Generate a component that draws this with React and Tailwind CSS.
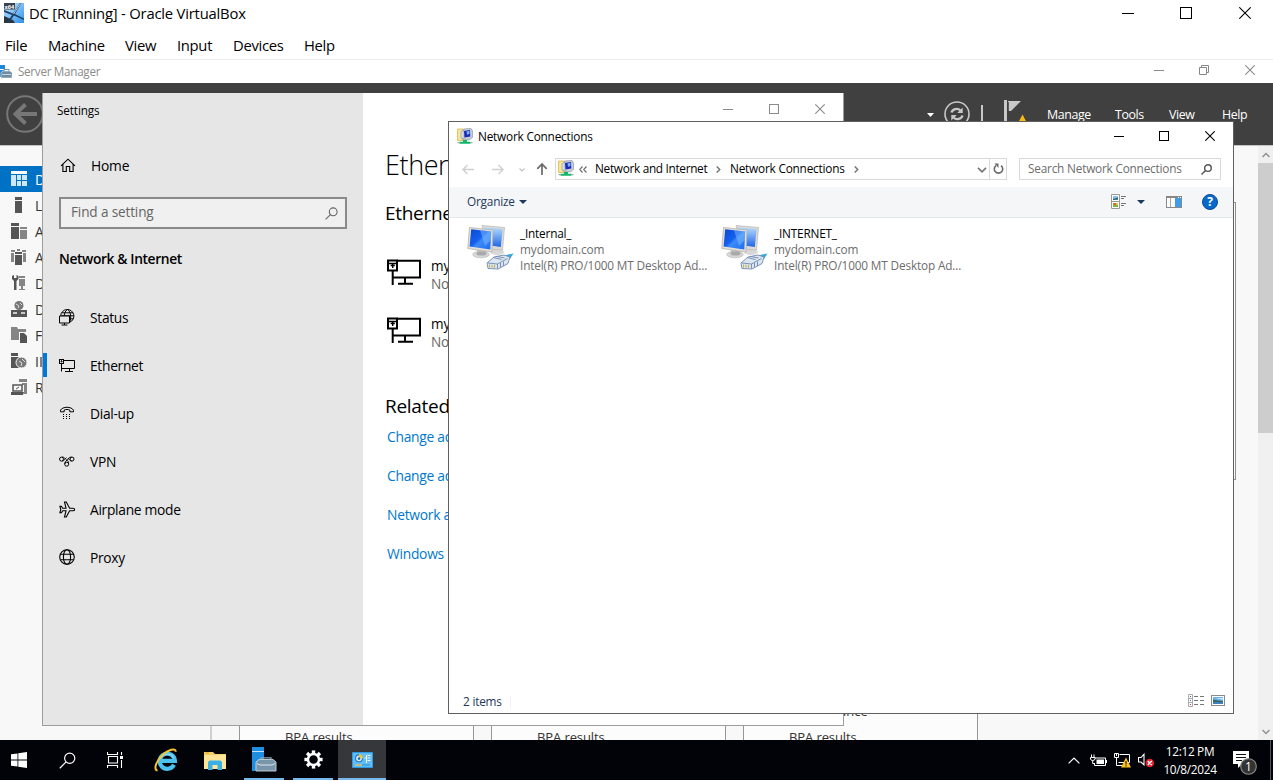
import React from "react";

const svg = (w, h, children, extra = {}) => (
  <svg width={w} height={h} viewBox={`0 0 ${w} ${h}`} fill="none" className="block shrink-0" {...extra}>
    {children}
  </svg>
);

/* ---------- window buttons ---------- */
const Min = ({ s = 10, c = "#000" }) => svg(s, s, <rect x="0" y={Math.floor(s / 2)} width={s} height="1" fill={c} />);
const Max = ({ s = 10, c = "#000" }) =>
  svg(s, s, <rect x="0.5" y="0.5" width={s - 1} height={s - 1} stroke={c} />);
const Close = ({ s = 10, c = "#000" }) =>
  svg(s, s, <path d={`M0.3 0.3L${s - 0.3} ${s - 0.3}M${s - 0.3} 0.3L0.3 ${s - 0.3}`} stroke={c} strokeWidth="1.1" />);
const Restore = ({ c = "#888" }) =>
  svg(10, 10, <path d="M0.5 2.5H7.5V9.5H0.5ZM2.5 2.5V0.5H9.5V7.5H7.5" stroke={c} />);

/* ---------- settings icons ---------- */
const Ethernet = () =>
  svg(16, 13, <>
    <path d="M5 1.5H15.5V9.5H3M10.5 9.5V12M6 12.5H14M2.5 5V12.5" stroke="#000" />
    <rect x="0.5" y="0.5" width="4" height="4" stroke="#000" />
    <path d="M2.5 1V3.5M1.5 2.5H3.5" stroke="#000" strokeWidth="0.8" />
  </>);
const HomeIcon = () =>
  svg(16, 15, <path d="M1 7.8L8 1.2L15 7.8M2.9 6.3V13.5H6.3V8.5H9.7V13.5H13.1V6.3" stroke="#000" strokeWidth="1.1" />);
const StatusIcon = () =>
  svg(16, 17, <g transform="translate(0 -0.5)">
    <path d="M1.7 7.3A6.6 6.6 0 1 1 10.8 13.7M2.8 4.3H14M8.5 0.9C6.2 2.4 5.4 4.8 5.2 7.3M8.5 0.9C12 3.4 12.3 9 10.9 13.4M10.8 10.3H14M2.3 7.3H15" stroke="#000" strokeWidth="1" />
    <path d="M0.5 7.5H10.5V14.5H0.5Z" stroke="#000" fill="#e6e6e6" />
    <path d="M5.5 14.5V16.5M2.5 16.5H8.5" stroke="#000" />
  </g>);
const DialIcon = () =>
  svg(16, 14, <>
    <path d="M1.5 5.8V4.2C3.5 0.3 12.5 0.3 14.5 4.2V5.8H10.8V4C9 3.3 7 3.3 5.2 4V5.8Z" stroke="#000" />
    {[8, 10, 12].map((y) => [4, 7, 10].map((x) => <rect key={`${x}-${y}`} x={x} y={y} width="1" height="1" fill="#000" />))}
  </>);
const VpnIcon = () =>
  svg(16, 11, <>
    <circle cx="2.5" cy="3.1" r="2" stroke="#000" />
    <circle cx="13" cy="3.1" r="2" stroke="#000" />
    <circle cx="7.7" cy="8.2" r="2" stroke="#000" />
    <path d="M3 1C5.5 0.8 6 3 7.5 3.8C9 4.6 9.6 5.6 9.6 7.5M3.2 5C5.5 5 6 2.6 7.5 1.6M12.5 1C10 0.8 9.3 3.2 8 4.2C6.4 5.4 5.8 6 5.8 8M12.5 5C10.8 5 10 3 8.8 2" stroke="#000" strokeWidth="0.9" />
  </>);
const PlaneIcon = () =>
  svg(17, 17, <path d="M15.6 8.5C15.6 7.7 14.9 7.2 14 7.2H10.6L7.3 1H5.5L7 7.2H3.7L2.4 5.2H0.9L1.8 8.5L0.9 11.8H2.4L3.7 9.8H7L5.5 16H7.3L10.6 9.8H14C14.9 9.8 15.6 9.3 15.6 8.5Z" stroke="#000" strokeWidth="1.1" />);
const GlobeIcon = () =>
  svg(16, 16, <g stroke="#000" strokeWidth="1.1">
    <circle cx="8" cy="8" r="7.3" />
    <ellipse cx="8" cy="8" rx="3.6" ry="7.3" />
    <path d="M1.5 5.2H14.5M1.5 10.8H14.5" />
  </g>);
const Adapter = () =>
  svg(36, 27, <g stroke="#000" strokeWidth="2">
    <path d="M10 1.7H33V18.5H5.5M18 18.5V24.5M11 24.8H26M5.7 12V26" strokeWidth="2" />
    <rect x="1" y="1.5" width="9" height="10" />
    <path d="M2 4.5H9.5M5.7 5V9M3.7 6.5H7.8" strokeWidth="1.4" />
  </g>);

/* ---------- explorer icons ---------- */
const NetFolder = () =>
  svg(17, 17, <>
    <path d="M0.5 1H6V12.5H0.5Z" fill="#f7e59b" stroke="#d9b84d" strokeWidth="0.8" />
    <path d="M6.5 1L14 0.5L15.5 3V9.5L12 12L5 11Z" fill="#c6cdd6" stroke="#8c97a8" strokeWidth="0.7" />
    <path d="M4 3.5L7 2.5V11L4 10Z" fill="#d8dde4" stroke="#8c97a8" strokeWidth="0.6" />
    <path d="M7 3L13 2L13.3 8.5L7.5 9.5Z" fill="#1c2bb5" />
    <path d="M9.5 3.5L12.5 2.8V6L10 6.8Z" fill="#7db4ff" />
    <path d="M6 12H10V13.7H13.5V15.7H2.5V13.7H6Z" fill="#12b76b" />
    <path d="M0.5 14.7H2.5M13.5 14.7H15.5" stroke="#8f8f8f" />
  </>);
const Connection = () =>
  svg(48, 48, <>
    <defs>
      <linearGradient id="scr" x1="0" y1="0" x2="1" y2="1">
        <stop offset="0" stopColor="#0a49d4" />
        <stop offset="0.45" stopColor="#1560ee" />
        <stop offset="0.55" stopColor="#3b8cf8" />
        <stop offset="1" stopColor="#1f6bf0" />
      </linearGradient>
      <linearGradient id="scr2" x1="0" y1="0" x2="0" y2="1">
        <stop offset="0" stopColor="#b5dcfb" />
        <stop offset="1" stopColor="#1f66e8" />
      </linearGradient>
    </defs>
    <g transform="translate(0 1)">
      <ellipse cx="30" cy="27" rx="7" ry="3" fill="#d8d8d8" />
      <path d="M15 0.5L37.5 2.5L35.5 25L20 24Z" fill="#dcdad6" stroke="#b9b6b0" strokeWidth="0.7" />
      <path d="M17 2.2L35.6 4L33.8 22L20 20Z" fill="url(#scr2)" />
      <path d="M10 25L19 26L20 30H10Z" fill="#bdbdbd" />
      <ellipse cx="14" cy="29.5" rx="8.3" ry="3.3" fill="#d6d6d6" stroke="#b5b5b5" strokeWidth="0.6" />
      <ellipse cx="14.5" cy="28.5" rx="5" ry="2" fill="#a9a9a9" />
      <path d="M2.5 2.5L26 5L25 27L0.8 23.5Z" fill="#e2e0dc" stroke="#b6b3ad" strokeWidth="0.8" />
      <path d="M4.2 4.3L24.2 6.6L23.3 24.5L2.6 21.6Z" fill="url(#scr)" />
      <path d="M13 5.3L24.2 6.6L23.8 15L18 21Z" fill="#8cc5fc" opacity="0.45" />
      <path d="M35 32L41 29.5L46.5 28.5L43 34L38 36Z" fill="#36a8dc" />
      <path d="M20 38L27 32L37 30L43 32L41 38.5L31 44L21 43.5Z" fill="#dbe6f2" stroke="#7189ad" strokeWidth="0.9" />
      <path d="M21 38L30.5 39L40.5 33.5M30.5 39V43.5M26.5 32.5L34.5 34.5M29.5 31.4L37.5 33M33.5 38V42.5M36.5 36.5V41" stroke="#7189ad" strokeWidth="0.9" />
      <path d="M22.5 39.5V42.5M25 39.8V42.8M27.5 40V43" stroke="#c2b25b" strokeWidth="1.1" />
    </g>
  </>);
const Chevron = ({ d, w, h, c, sw = 1.5 }) => svg(w, h, <path d={d} stroke={c} strokeWidth={sw} />);
const Lens = ({ s = 13, c = "#000", sw = 1.1 }) => (
  <svg width={s} height={s} viewBox="0 0 13 13" fill="none" className="block shrink-0">
    <circle cx="8.2" cy="4.8" r="3.9" stroke={c} strokeWidth={sw} />
    <path d="M5.4 7.6L0.6 12.4" stroke={c} strokeWidth={sw} />
  </svg>
);

/* ---------- server manager sidebar icons ---------- */
const sm = {
  dash: <><rect width="16" height="3" fill="#fff" /><path d="M0 4H5V15H0ZM6 4H10V9H6ZM11 4H16V9H11ZM6 10H10V15H6ZM11 10H16V15H11Z" fill="#cfe6f7" /></>,
  local: <><rect x="4" width="7" height="3" fill="#555" /><rect x="4" y="4" width="7" height="12" fill="#555" /></>,
  all: <><path d="M0 0H8V3H0ZM0 4H8V16H0Z" fill="#555" /><path d="M9 4H16V6H9ZM9 7H16V16H9Z" fill="#858585" /></>,
  ad: <><path d="M0 1H4V3H0ZM0 4H3V13H0ZM11 1H15V3H11ZM12 4H15V13H12Z" fill="#858585" /><path d="M4 3H11V5H4ZM4 6H11V16H4Z" fill="#555" /><path d="M6 0L9 0V2H6Z" fill="#858585" /></>,
  dhcp: <><path d="M1 1V4L3 6V15H5.5V6L7.5 4V1L5.5 0V3H3V0Z" fill="#555" /><path d="M8 1H14V3H8ZM8 4H14V11H12V14H14V15H8V14H10V11H8Z" fill="#858585" /></>,
  dns: <><circle cx="8" cy="4.5" r="4.5" fill="#777" /><path d="M5 3L8 5L7 7M9 2L11 4" stroke="#ddd" /><path d="M0 9H16V16H0Z" fill="#555" /><path d="M2 12H6M10 12H14" stroke="#eee" strokeWidth="1.4" /></>,
  file: <><path d="M0 0H6L7 2H15V5H0ZM0 4H8V13H0Z" fill="#858585" /><path d="M9 6H13L16 9V16H9Z" fill="#555" /></>,
  iis: <><path d="M0 0H7V3H0ZM0 4H8V15H0Z" fill="#555" /><circle cx="10.5" cy="9.5" r="5.5" fill="#777" stroke="#f8f8f8" /><path d="M8 8L11 10L10 13M11 6L14 9" stroke="#ddd" /></>,
  remote: <><path d="M8 0H16V3H8ZM11 4H16V15H13V6H11Z" fill="#858585" /><path d="M2 6H11V12H2Z" stroke="#555" strokeWidth="1.5" /><path d="M0 13H13L12 16H0Z" fill="#555" /><path d="M5 10L8 8" stroke="#555" /></>,
};

const roles = [
  ["dash", "Dashboard"], ["local", "Local Server"], ["all", "All Servers"], ["ad", "AD DS"], ["dhcp", "DHCP"],
  ["dns", "DNS"], ["file", "File and Storage Services"], ["iis", "IIS"], ["remote", "Remote Access"],
];

function ServerManager() {
  return (
    <div className="flex h-[680px] flex-col">
      <div className="flex h-[23px] items-center bg-white text-[#8b8b8b]">
        {svg(13, 14, <>
          <path d="M0 0H5V4H0ZM0 5H4V12H0Z" fill="#1e88d8" />
          <path d="M1 7.5L3 6H10L12 7.5V13H1Z" fill="#6f8ea3" stroke="#fff" strokeWidth="0.5" />
          <path d="M4 6V4.5H9V6M1 9H12" stroke="#6f8ea3" />
          <path d="M2 9.5H11" stroke="#dfe8ee" strokeWidth="0.8" />
        </>)}
        <span className="ml-[5px] pt-px text-[11.7px] tracking-[-0.3px]">Server Manager</span>
        <div className="ml-auto flex items-center pb-[3px] pr-[18px]">
          <Min c="#8b8b8b" />
          <div className="ml-[35px]"><Restore /></div>
          <div className="ml-[36px]"><Close c="#8b8b8b" /></div>
        </div>
      </div>
      <div className="flex h-[62px] items-center bg-[#404040] text-white">
        <div className="ml-[6px]">
          {svg(38, 38, <>
            <circle cx="19" cy="19" r="17.8" stroke="#777" strokeWidth="2" />
            <path d="M31 19H10M19.5 9.5L9.5 19L19.5 28.5" stroke="#777" strokeWidth="4" />
          </>)}
        </div>
        <div className="ml-auto flex items-center pr-[25px]">
          <div className="pt-[2px]">{svg(7, 4, <path d="M0 0H7L3.5 4Z" fill="#fff" />)}</div>
          <div className="ml-[10px]">
            {svg(26, 26, <>
              <circle cx="13" cy="13" r="12" stroke="#c8c8c8" strokeWidth="1.6" />
              <path d="M7.5 11.5C8.5 8 13.5 6.5 16.5 9.5M18.5 14.5C17.5 18 12.5 19.5 9.5 16.5" stroke="#c8c8c8" strokeWidth="2.4" />
              <path d="M18.7 6.5V12H13.2ZM7.3 19.5V14H12.8Z" fill="#c8c8c8" />
            </>)}
          </div>
          <div className="ml-[11px] h-[18px] w-[2px] bg-[#c8c8c8]" />
          <div className="ml-[21px]">
            {svg(24, 28, <>
              <rect x="0" y="0" width="3" height="28" fill="#c8c8c8" />
              <path d="M4 1H17L7 11H4Z" fill="#c8c8c8" />
              <path d="M4.5 2V11" stroke="#404040" strokeWidth="0.8" />
              <path d="M18.5 14.5L23.5 24H13.5Z" fill="#fdb913" />
            </>)}
          </div>
          <div className="ml-[19px] flex pt-[2px] text-[12.4px] tracking-[-0.4px]">
            <span className="w-[68px]">Manage</span>
            <span className="w-[54px]">Tools</span>
            <span className="w-[53px]">View</span>
            <span className="w-[26px]">Help</span>
          </div>
        </div>
      </div>
      <div className="flex flex-1 border-t border-[#c4c4c4] bg-[#f8f8f8]">
        <div className="w-[212px] overflow-hidden border-r-2 border-[#cfcfcf] pt-[20px]">
          {roles.map(([k, name], i) => (
            <div key={name} className={i === 0 ? "flex h-[26px] items-center bg-[#0072c6] pl-[11px] text-[14px] text-white" : "flex h-[26px] items-center pl-[11px] text-[14px] text-[#333]"}>
              {svg(16, 16, sm[k])}
              <span className="ml-[8px] whitespace-nowrap">{name}</span>
            </div>
          ))}
        </div>
        <div className="flex flex-1 flex-col justify-between bg-[#f8f8f8] pt-[56px]">
          <div className="mr-[22px] h-[278px] border border-l-0 border-[#8f8f8f] bg-[#fcfcfc] pr-px" />
          <div className="flex h-[42px] gap-[17px] pl-[27px]">
            {[0, 1, 2].map((i) => (
              <div key={i} className="flex w-[235px] flex-col items-start justify-end border-x border-[#969696] bg-[#fcfcfc] pl-[45px] text-[13px] text-[#333]">
                <span className="h-[27px] leading-[18px]">Performance</span>
                <span className="h-[11px] leading-[17px] tracking-[-0.1px]">BPA results</span>
              </div>
            ))}
          </div>
        </div>
        <div className="flex w-[15px] flex-col items-center bg-[#f0f0f0]">
          <div className="flex h-[17px] items-center"><Chevron w={8} h={6} d="M0.5 5L4 1.5L7.5 5" c="#909090" /></div>
          <div className="h-[270px] w-full bg-[#cdcdcd]" />
          <div className="mt-auto flex h-[17px] items-center"><Chevron w={8} h={6} d="M0.5 1L4 4.5L7.5 1" c="#909090" /></div>
        </div>
      </div>
    </div>
  );
}

const nav = [
  ["Status", StatusIcon], ["Ethernet", Ethernet], ["Dial-up", DialIcon], ["VPN", VpnIcon], ["Airplane mode", PlaneIcon], ["Proxy", GlobeIcon],
];

function SettingsWindow() {
  return (
    <div className="absolute left-[42px] top-[33px] flex h-[633px] w-[802px] border border-t-0 border-[#9d9d9d] bg-white text-black">
      <div className="flex w-[320px] shrink-0 flex-col bg-[#e6e6e6]">
        <div className="flex h-[34px] items-center pl-[14px] pt-[2px] text-[11.7px] tracking-[-0.1px]">Settings</div>
        <div className="mt-[15px] flex h-[48px] items-center pl-[17px] text-[13.8px] tracking-[-0.2px]">
          <div className="pb-px"><HomeIcon /></div><span className="ml-[15px] pt-px">Home</span>
        </div>
        <div className="ml-[16px] mt-[7px] flex h-[32px] w-[288px] items-center justify-between border-2 border-[#8a8a8a] bg-[#f0f0f0] pl-[10px] pr-[7px] text-[13.6px] tracking-[-0.15px] text-[#666]">
          <span className="pb-[2px]">Find a setting</span><Lens c="#666" />
        </div>
        <div className="mt-[14px] flex h-[32px] items-center pl-[16px] text-[13.8px] font-semibold tracking-[-0.38px]">Network &amp; Internet</div>
        <div className="mt-[19px] flex flex-col">
          {nav.map(([name, Icon]) => (
            <div key={name} className="flex h-[48px] items-center text-[13.8px] tracking-[-0.3px]">
              <div className={name === "Ethernet" ? "mb-[2px] h-[24px] w-[4px] bg-[#0078d7]" : "mb-[2px] h-[24px] w-[4px]"} />
              <div className="ml-[12px] flex w-[31px] pb-[2px]"><Icon /></div>
              <span className="pt-px">{name}</span>
            </div>
          ))}
        </div>
      </div>
      <div className="flex flex-1 flex-col pl-[22px]">
        <div className="flex h-[32px] items-center justify-end gap-[36px] pr-[18px]">
          <Min c="#8b8b8b" /><Max c="#8b8b8b" /><Close c="#8b8b8b" />
        </div>
        <h1 className="mt-[20px] h-[40px] text-[27px] font-light leading-[40px] tracking-[-0.4px]">Ethernet</h1>
        <h2 className="mt-[12px] h-[32px] text-[19px] leading-[32px] tracking-[-0.3px]">Ethernet</h2>
        <div className="mt-[26px] flex flex-col pl-[2px]">
          {[0, 1].map((i) => (
            <div key={i} className="flex h-[58px] items-start text-[13.6px] leading-[18px] tracking-[-0.15px]">
              <div className="mt-[4px]"><Adapter /></div>
              <div className="ml-[8px] mt-[2px]">
                <div>mydomain.com</div>
                <div className="text-[#666]">Not connected</div>
              </div>
            </div>
          ))}
        </div>
        <h2 className="mt-[19px] h-[32px] text-[19px] leading-[32px] tracking-[-0.3px]">Related settings</h2>
        <div className="ml-[2px] mt-px flex flex-col text-[13.8px] tracking-[-0.25px] text-[#0078d0]">
          {["Change adapter options", "Change advanced sharing options", "Network and Sharing Center", "Windows Firewall"].map((t) => (
            <a key={t} className="h-[39px] leading-[28px]">{t}</a>
          ))}
        </div>
      </div>
    </div>
  );
}

function NetworkWindow() {
  return (
    <div className="absolute left-[448px] top-[61px] flex h-[593px] w-[786px] flex-col border border-[#606060] bg-white text-[11.8px] tracking-[-0.2px] text-black">
      <div className="flex h-[30px] items-center pl-[8px]">
        <div className="pb-px"><NetFolder /></div><span className="ml-[4px]">Network Connections</span>
        <div className="ml-auto flex items-center pb-[2px] pr-[18px]">
          <Min />
          <div className="ml-[35px]"><Max /></div>
          <div className="ml-[36px]"><Close /></div>
        </div>
      </div>
      <div className="flex h-[35px] items-center pl-[13px]">
        <Chevron w={12} h={11} d="M12 5.5H1M5.5 1L1 5.5L5.5 10" c="#d0d0d0" />
        <div className="ml-[18px]"><Chevron w={12} h={11} d="M0 5.5H11M6.5 1L11 5.5L6.5 10" c="#d0d0d0" /></div>
        <div className="ml-[15px]"><Chevron w={6} h={4} d="M0.5 0.5L3 3L5.5 0.5" c="#c0c0c0" sw={1.2} /></div>
        <div className="ml-[11px] pb-px"><Chevron w={12} h={12} d="M6 12V1M1.3 5.8L6 1L10.7 5.8" c="#6a6a6a" sw={1.7} /></div>
        <div className="mb-px ml-[7px] flex h-[22px] w-[452px] items-center border border-[#d9d9d9] pl-[2px]">
          <div className="pb-[2px]"><NetFolder /></div>
          <div className="ml-[4px]"><Chevron w={9} h={7} d="M3.5 0.5L0.7 3.5L3.5 6.5M7.5 0.5L4.7 3.5L7.5 6.5" c="#666" sw={1.1} /></div>
          <span className="ml-[7px] w-[112px] whitespace-nowrap tracking-[-0.3px]">Network and Internet</span>
          <div className="ml-[9px]"><Chevron w={5} h={7} d="M0.7 0.5L3.7 3.5L0.7 6.5" c="#777" /></div>
          <span className="ml-[9px] w-[115px] whitespace-nowrap">Network Connections</span>
          <div className="ml-[9px]"><Chevron w={5} h={7} d="M0.7 0.5L3.7 3.5L0.7 6.5" c="#777" /></div>
          <div className="ml-auto flex h-full items-center">
            <div className="mr-[2px] pt-px"><Chevron w={10} h={6} d="M1 0.8L5 4.8L9 0.8" c="#777" sw={1.7} /></div>
            <div className="flex h-full w-[17px] items-center justify-center border-l border-[#d9d9d9]">
              {svg(11, 12, <>
                <path d="M8 2.6A4.2 4.2 0 1 1 3 2.6" stroke="#6a6a6a" strokeWidth="1.6" />
                <path d="M1.5 0.5H5.5V5Z" fill="#6a6a6a" />
              </>)}
            </div>
          </div>
        </div>
        <div className="mb-px ml-[12px] flex h-[22px] w-[202px] items-center justify-between border border-[#d9d9d9] pl-[8px] pr-[8px] text-[#6d6d6d]">
          <span>Search Network Connections</span><Lens s={11} c="#555" sw={1.7} />
        </div>
      </div>
      <div className="flex h-[31px] items-center border-b border-[#e4e7eb] bg-[#f4f6f8] pl-[18px] text-[#1e395b]">
        <span>Organize</span>
        <div className="ml-[4px]">{svg(8, 4, <path d="M0 0H8L4 4Z" fill="#1e395b" />)}</div>
        <div className="ml-auto flex items-center pr-[15px]">
          <div className="pb-px">
            {svg(15, 15, <>
              <path d="M0.5 0.5H8.5V14.5H0.5ZM0.5 7.5H8.5" stroke="#999" fill="#fff" />
              <rect x="2" y="2" width="5" height="4" fill="#8cbcf5" />
              <path d="M2 5L7 3.5V5.5L2 6Z" fill="#2b6068" />
              <rect x="2" y="9" width="5" height="4" fill="#7cb342" />
              <rect x="3" y="9" width="2" height="2" fill="#e0632b" />
              <rect x="5" y="9" width="2" height="2" fill="#d9c94b" />
              <path d="M10 2.5H15M10 4.5H13M10 9.5H15M10 11.5H13" stroke="#777" />
            </>)}
          </div>
          <div className="ml-[11px]">{svg(8, 4, <path d="M0 0H8L4 4Z" fill="#1e395b" />)}</div>
          <div className="ml-[21px]">
            {svg(16, 12, <>
              <rect x="0.5" y="0.5" width="15" height="11" fill="#fff" stroke="#888" />
              <path d="M0 1H16" stroke="#888" strokeWidth="2" />
              <path d="M4.5 2V11" stroke="#aaa" />
              <rect x="9" y="2" width="6" height="9" fill="#3f9ce8" />
              <rect x="12" y="1" width="1" height="1" fill="#fff" /><rect x="14" y="1" width="1" height="1" fill="#fff" />
            </>)}
          </div>
          <div className="ml-[20px] flex h-4 w-4 items-center justify-center rounded-full border border-[#0a4c94] bg-[#0669cc] text-[12px] font-bold tracking-normal text-white">?</div>
        </div>
      </div>
      <div className="flex flex-1 items-start pl-[18px] pt-[6px]">
        {["_Internal_", "_INTERNET_"].map((n) => (
          <div key={n} className="flex w-[254px]">
            <Connection />
            <div className="ml-[5px] mt-px leading-[16px] text-[#6d6d6d]">
              <div className="text-black">{n}</div>
              <div className="tracking-[-0.1px]">mydomain.com</div>
              <div className="whitespace-nowrap tracking-[-0.15px]">Intel(R) PRO/1000 MT Desktop Ad...</div>
            </div>
          </div>
        ))}
      </div>
      <div className="flex h-[22px] items-center pl-[14px] pr-[8px] text-[#1e395b]">
        <span>2 items</span>
        <div className="ml-[8px] h-[12px] w-px bg-[#f0f0f0]" />
        <div className="ml-auto pb-[3px]">
          {svg(16, 13, <>
            <path d="M0.5 0.5H4.5V12.5H0.5ZM0.5 4.5H4.5M0.5 8.5H4.5" stroke="#aaa" />
            <rect x="2" y="2" width="1" height="1" fill="#555" /><rect x="2" y="6" width="1" height="1" fill="#2b7cd3" /><rect x="2" y="10" width="1" height="1" fill="#d33" />
            <path d="M6 2.5H10M12 2.5H16M6 6.5H10M12 6.5H16M6 10.5H10M12 10.5H16" stroke="#777" />
          </>)}
        </div>
        <div className="ml-[7px] pb-[3px]">
          {svg(14, 11, <>
            <rect x="0.5" y="0.5" width="13" height="10" fill="#fff" stroke="#8a8a8a" />
            <rect x="2" y="2" width="10" height="7" fill="#6fb2ec" />
            <path d="M2 4.5L6 5.3L12 6V7H2Z" fill="#2f6b62" /><path d="M2 7H12V9H2Z" fill="#3f7fc0" />
            <path d="M5 3H12V5Z" fill="#cfe6fa" />
          </>)}
        </div>
      </div>
    </div>
  );
}

function Taskbar() {
  return (
    <div className="flex h-[40px] items-stretch bg-[#010308] text-white">
      <div className="flex w-[38px] items-center justify-center">
        {svg(16, 16, <path d="M0 2.3L6.5 1.4V7.5H0ZM7.3 1.3L16 0V7.5H7.3ZM0 8.4H6.5V14.6L0 13.7ZM7.3 8.4H16V16L7.3 14.7Z" fill="#fff" />)}
      </div>
      <div className="ml-[5px] flex w-[48px] items-center justify-center"><Lens s={17} c="#fff" sw={0.9} /></div>
      <div className="flex w-[48px] items-center justify-center">
        {svg(17, 16, <>
          <path d="M0.5 0V2.5H10.5V0M1.5 4.5H10.5V11H1.5ZM0.5 16V13.5H10.5V16M14.5 0V3M14.5 8V16" stroke="#fff" strokeWidth="1.1" />
          <rect x="13" y="4" width="3" height="3" fill="#fff" />
        </>)}
      </div>
      <div className="flex w-[54px] items-center justify-center">
        {svg(24, 24, <>
          <path d="M20 16.8A7.6 7.6 0 1 1 20.9 12.9H7.5" stroke="#4cc1ef" strokeWidth="4.2" />
          <path d="M6.5 11C7.5 5.5 17 4 19.5 10" stroke="#8adcf8" strokeWidth="1.4" />
          <path d="M3.5 22.5C-0.5 22 1.5 14 8 7.5C14 1.8 21.5 -0.8 21.8 3.7" stroke="#f7c52f" strokeWidth="2" />
        </>)}
      </div>
      <div className="flex w-[44px] items-center justify-center">
        {svg(22, 19, <>
          <path d="M0 1H9L11 3H22V18H0Z" fill="#f5cf67" />
          <path d="M0 4H22V18H0Z" fill="#fde496" />
          <path d="M4 19V11L5.5 9.5H16.5L18 11V19H13.5V14H8.5V19Z" fill="#3ab0e6" />
          <path d="M1.5 2H5" stroke="#e5a11d" />
        </>)}
      </div>
      <div className="ml-[7px] flex w-[40px] flex-col items-center justify-end">
        <div className="mb-[6px]">
          {svg(26, 25, <>
            <path d="M1 0H13V4H1ZM1 5H13V24H1Z" fill="#1e8fe0" />
            <path d="M1 4.5H13" stroke="#bfe2fa" />
            <path d="M5 15L8 12.5H22L25 15V24H5Z" fill="#7895a9" stroke="#c9d6df" strokeWidth="0.9" />
            <path d="M10 12.5V10.8H20V12.5" stroke="#8fa8b9" strokeWidth="1.3" />
            <path d="M6 16.5L9 18H21L24 16.5" stroke="#dce5eb" />
          </>)}
        </div>
        <div className="h-[2px] w-full bg-[#76b9ed]" />
      </div>
      <div className="ml-[9px] flex w-[40px] flex-col items-center justify-end">
        <div className="mb-[9px]">
          {svg(19, 19, <>
            <circle cx="9.5" cy="9.5" r="5.5" stroke="#fff" strokeWidth="2.4" />
            {[0, 45, 90, 135, 180, 225, 270, 315].map((a) => <rect key={a} x="7.8" y="0.4" width="3.4" height="3.6" fill="#fff" transform={`rotate(${a} 9.5 9.5)`} />)}
          </>)}
        </div>
        <div className="h-[2px] w-full bg-[#76b9ed]" />
      </div>
      <div className="ml-[5px] flex w-[48px] flex-col items-center justify-end bg-[#36373b]">
        <div className="mb-[10px]">
          {svg(21, 16, <>
            <rect x="0" y="0" width="21" height="16" rx="0.8" fill="#2f9be4" />
            <rect x="1" y="1" width="19" height="14" fill="#5fbcf4" />
            <circle cx="7" cy="6.3" r="4" fill="#2277bb" />
            <circle cx="7" cy="6.3" r="2.9" fill="#d9effc" />
            <path d="M7 6.3V2A4.2 4.2 0 0 1 11.2 6.3Z" fill="#f5c242" />
            <circle cx="7" cy="6.6" r="1.3" fill="#1570b8" />
            <path d="M15.5 3.5H18.5M15.5 6H18.5M15.5 8.5H18.5M14.5 3V11M12.5 6H14.5" stroke="#fff" strokeWidth="0.9" />
            <path d="M3 13H10" stroke="#f5c242" strokeWidth="1.2" /><path d="M10 13H18" stroke="#2d8fd6" />
          </>)}
        </div>
        <div className="h-[2px] w-full bg-[#76b9ed]" />
      </div>
      <div className="ml-auto flex items-center">
        <Chevron w={12} h={7} d="M0.6 6.4L6 1L11.4 6.4" c="#fff" sw={1.2} />
        <div className="ml-[10px]">
          {svg(17, 13, <>
            <path d="M5 4H15.5V11.5H4.5V9" stroke="#fff" /><rect x="6.5" y="5.5" width="7.5" height="4.5" fill="#fff" /><rect x="16" y="6" width="1" height="3" fill="#fff" />
            <path d="M1.5 0.5V3M4 0.5V3M0.5 3.5H5V5C5 7 0.5 7 0.5 5ZM2.7 6.5V9.5H5" stroke="#fff" />
          </>)}
        </div>
        <div className="ml-[7px] pt-px">
          {svg(17, 15, <>
            <path d="M5.5 1.5H15.5V9.5H4.5M2.5 5V12.5H8M0.5 0.5H4.5V4.5H0.5ZM2.5 1V3" stroke="#fff" />
            <path d="M12 4.5L17 14.5H7Z" fill="#fdc51b" /><path d="M12 8V11.5M12 12.3V13.5" stroke="#222" strokeWidth="1.2" />
          </>)}
        </div>
        <div className="ml-[7px]">
          {svg(17, 15, <>
            <path d="M0.5 4.5H3L6 1.2V12L3 9H0.5Z" stroke="#fff" strokeWidth="1.1" />
            <circle cx="11.8" cy="10" r="4.3" fill="#e3202d" /><path d="M9.8 8L13.8 12M13.8 8L9.8 12" stroke="#fff" strokeWidth="1.4" />
          </>)}
        </div>
        <div className="ml-[5px] flex w-[60px] flex-col items-center pb-px text-[11.8px] leading-[18px] tracking-[-0.3px]">
          <span>12:12 PM</span><span>10/8/2024</span>
        </div>
        <div className="ml-[13px] mt-[5px]">
          {svg(26, 24, <>
            <path d="M0 0H16V13H9L5 17V13H0Z" fill="#fff" /><path d="M3 3.5H13M3 6.5H13M3 9.5H9" stroke="#111" />
            <circle cx="15.5" cy="15.5" r="7.8" fill="#333" stroke="#8a8a8a" strokeWidth="1.1" />
            <text x="15.5" y="20" textAnchor="middle" fontSize="12" fill="#fff">1</text>
          </>)}
        </div>
        <div className="ml-[11px] h-full w-[3px] border-l border-[#555]" />
      </div>
    </div>
  );
}

export default function App() {
  return (
    <div className="flex h-[781px] w-[1273px] flex-col overflow-hidden bg-white font-['Open_Sans','Noto_Sans',sans-serif] text-black">
      <div className="flex h-[28px] items-center pl-[4px] text-[14.8px] tracking-[-0.2px]">
        <div className="pb-[2px]">
          {svg(20, 20, <>
            <defs><linearGradient id="vb" x1="0" y1="0" x2="1" y2="1"><stop offset="0" stopColor="#c5ecff" /><stop offset="1" stopColor="#2f8fec" /></linearGradient></defs>
            <rect width="20" height="20" fill="url(#vb)" />
            <path d="M0 13L9 17L11 20H0Z" fill="#2c3440" />
            <path d="M0 7L9 10.5L16 0H17.5L11 11L20 15.5V17L10 12.5L4.5 20H3L8 12L0 9Z" fill="#1b3f66" />
            <path d="M9.5 11L16.5 0.5" stroke="#d9f2ff" strokeWidth="0.8" />
            <rect width="11" height="6.5" fill="#39434f" />
            <text x="0.5" y="5.6" fontSize="5.6" fontWeight="bold" letterSpacing="0" fill="#fff">x64</text>
          </>)}
        </div>
        <span className="ml-[5px] pb-[2px]">DC [Running] - Oracle VirtualBox</span>
        <div className="ml-auto flex items-center pb-[2px] pr-[22px]">
          <Min s={12} />
          <div className="ml-[46px]"><Max s={12} /></div>
          <div className="ml-[47px]"><Close s={12} /></div>
        </div>
      </div>
      <div className="flex h-[32px] items-center border-b border-[#ededed] pl-[5px] pt-[4px] text-[14.8px] tracking-[-0.3px]">
        <span className="w-[43px]">File</span>
        <span className="w-[77px]">Machine</span>
        <span className="w-[52px]">View</span>
        <span className="w-[56px]">Input</span>
        <span className="w-[71px]">Devices</span>
        <span>Help</span>
      </div>
      <div className="relative flex h-[720px] flex-col">
        <ServerManager />
        <Taskbar />
        <SettingsWindow />
        <NetworkWindow />
      </div>
    </div>
  );
}
